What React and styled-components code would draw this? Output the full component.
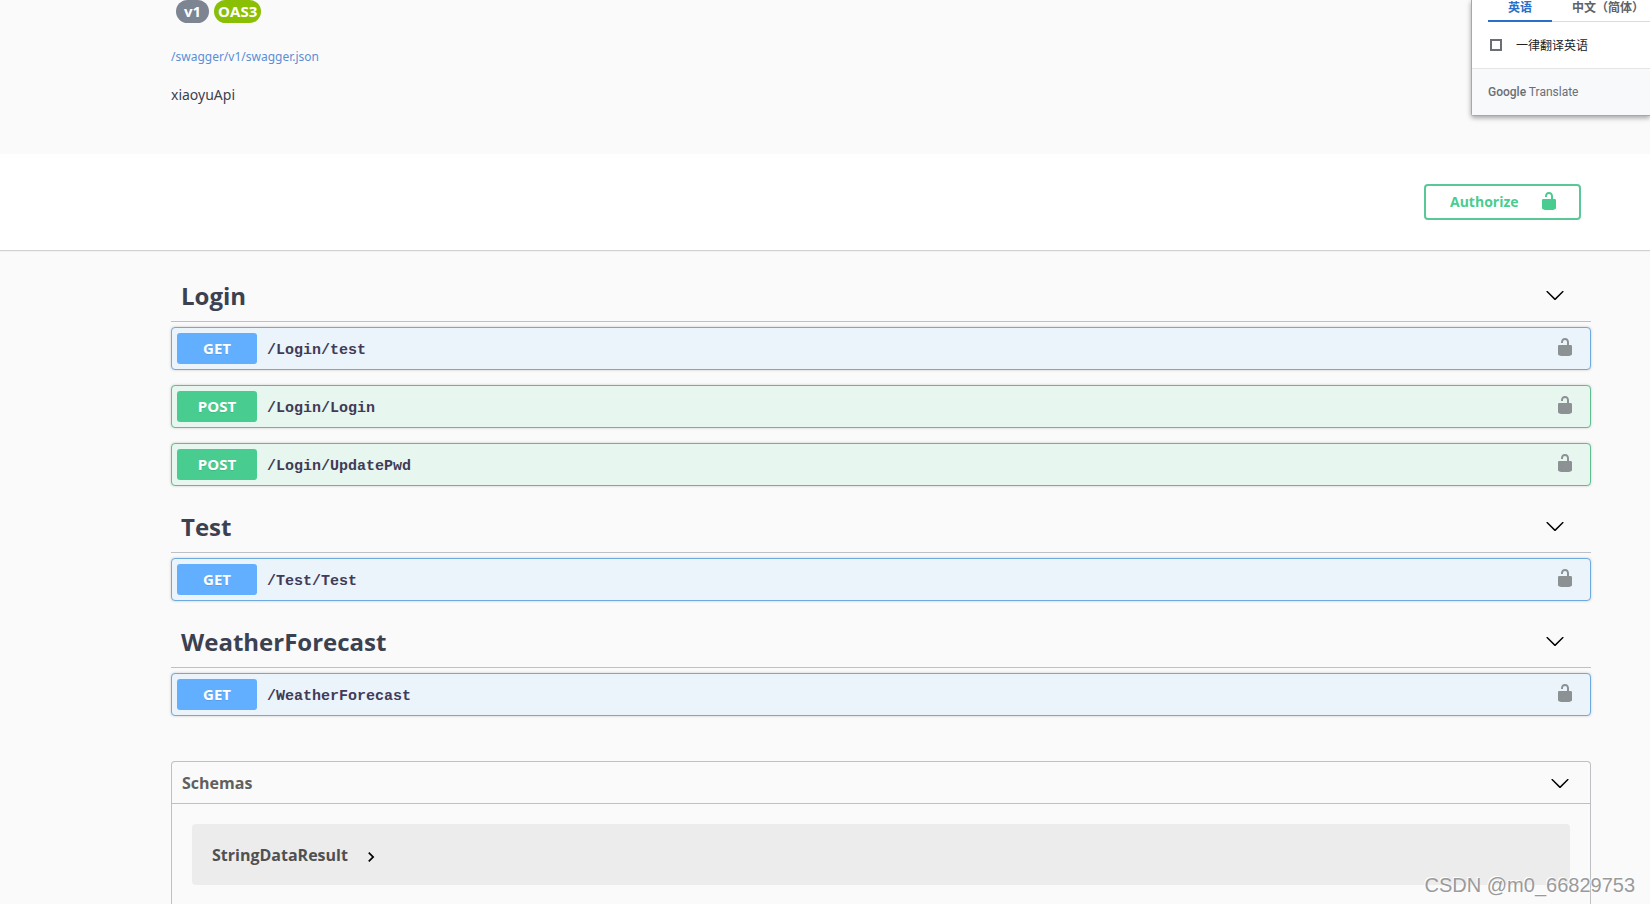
import React from 'react';
import styled, { createGlobalStyle } from 'styled-components';

const sections = [
    {
        name: 'Login',
        operations: [
            { method: 'get', path: '/Login/test' },
            { method: 'post', path: '/Login/Login' },
            { method: 'post', path: '/Login/UpdatePwd' },
        ],
    },
    { name: 'Test', operations: [{ method: 'get', path: '/Test/Test' }] },
    { name: 'WeatherForecast', operations: [{ method: 'get', path: '/WeatherForecast' }] },
];

const colors = {
    get: { main: '#61affe', border: '#6ea9e0', back: '#ebf3fb' },
    post: { main: '#49cc90', border: '#5fbd90', back: '#e7f6ee' },
};

const Unlocked = () => (
    <svg width="20" height="20" viewBox="0 0 20 20" fill="currentColor" aria-hidden="true">
        <path d="M15.8 8H14V5.6C14 2.703 12.665 1 10 1 7.334 1 6 2.703 6 5.6V6h2v-.801C8 3.754 8.797 3 10 3c1.203 0 2 .754 2 2.199V8H4c-.553 0-1 .646-1 1.199V17c0 .549.428 1.139.951 1.307l1.197.387C5.672 18.861 6.55 19 7.1 19h5.8c.549 0 1.428-.139 1.951-.307l1.196-.387c.524-.167.953-.757.953-1.306V9.199C17 8.646 16.352 8 15.8 8z" />
    </svg>
);

const ArrowDown = () => (
    <svg width="20" height="20" viewBox="0 0 20 20" aria-hidden="true">
        <path d="M17.418 6.109c.272-.268.709-.268.979 0s.271.701 0 .969l-7.908 7.83c-.27.268-.707.268-.979 0l-7.908-7.83c-.27-.268-.27-.701 0-.969.271-.268.709-.268.979 0L10 13.25l7.418-7.141z" />
    </svg>
);

const Chevron = () => (
    <svg width="20" height="20" viewBox="0 0 24 24" aria-hidden="true">
        <path d="M10 6L8.59 7.41 13.17 12l-4.58 4.59L10 18l6-6z" />
    </svg>
);

const Operation = ({ method, path }) => (
    <OpBlock $method={method}>
        <OpSummary>
            <Method $method={method}>{method.toUpperCase()}</Method>
            <Path>{path}</Path>
        </OpSummary>
        <LockButton aria-label={`Authorize ${path}`}>
            <Unlocked />
        </LockButton>
    </OpBlock>
);

const TranslatePopup = () => (
    <Popup>
        <Tabs>
            <Tab $active>英语</Tab>
            <Tab>中文（简体）</Tab>
        </Tabs>
        <Always>
            <input type="checkbox" />
            一律翻译英语
        </Always>
        <PopupFooter>
            <b>Google</b> Translate
        </PopupFooter>
    </Popup>
);

const App = () => {
    return (
        <Page>
            <GlobalStyle />
            <Info>
                <Badges>
                    <Badge>v1</Badge>
                    <Badge $oas>OAS3</Badge>
                </Badges>
                <SpecLink href="/swagger/v1/swagger.json">/swagger/v1/swagger.json</SpecLink>
                <Description>xiaoyuApi</Description>
            </Info>

            <SchemeContainer>
                <AuthorizeButton>
                    <span>Authorize</span>
                    <Unlocked />
                </AuthorizeButton>
            </SchemeContainer>

            <Main>
                {sections.map((section) => (
                    <section key={section.name}>
                        <SectionHeader>
                            <h3>{section.name}</h3>
                            <IconButton aria-label={`Collapse ${section.name}`}>
                                <ArrowDown />
                            </IconButton>
                        </SectionHeader>
                        {section.operations.map((op) => (
                            <Operation key={op.path} {...op} />
                        ))}
                    </section>
                ))}

                <Schemas>
                    <SchemasHeader>
                        <h4>Schemas</h4>
                        <IconButton aria-label="Collapse schemas">
                            <ArrowDown />
                        </IconButton>
                    </SchemasHeader>
                    <Model>
                        StringDataResult
                        <Chevron />
                    </Model>
                </Schemas>
            </Main>

            <TranslatePopup />
            <Watermark>CSDN @m0_66829753</Watermark>
        </Page>
    );
};

const GlobalStyle = createGlobalStyle`
    * {
        box-sizing: border-box;
    }

    body {
        margin: 0;
        background: #fafafa;
        color: #3b4151;
        font-family: "Open Sans", "Noto Sans", "Noto Sans CJK SC", sans-serif;
    }

    button {
        font-family: inherit;
        cursor: pointer;
    }

    h3, h4, p {
        margin: 0;
    }

    svg {
        display: block;
        flex-shrink: 0;
    }
`;

const Page = styled.div`
    position: relative;
    display: flex;
    flex-direction: column;
    min-height: 100vh;
    overflow: hidden;
`;

const Info = styled.header`
    display: flex;
    flex-direction: column;
    align-items: flex-start;
    height: 154px;
    padding: 0 59px 0 171px;
    font-family: "Noto Sans", sans-serif;
`;

const Badges = styled.div`
    display: flex;
    gap: 5px;
    padding-left: 5px;
    margin-bottom: 24px;
    font-family: "Open Sans", sans-serif;
`;

const Badge = styled.span`
    height: 23px;
    padding: 0 ${(props) => (props.$oas ? 4 : 8)}px;
    border-radius: 12px;
    background: ${(props) => (props.$oas ? '#89bf04' : '#7d8492')};
    color: #fff;
    font-size: 15px;
    font-weight: 700;
    line-height: 23px;
`;

const SpecLink = styled.a`
    color: #5a8fd6;
    font-size: 12px;
    line-height: 20px;
    text-decoration: none;
`;

const Description = styled.p`
    margin-top: 18px;
    font-size: 14px;
    line-height: 20px;
`;

const SchemeContainer = styled.div`
    display: flex;
    justify-content: flex-end;
    padding: 30px 69px 30px 171px;
    background: #fff;
    box-shadow: 0 1px 1px rgba(0, 0, 0, 0.16);
`;

const AuthorizeButton = styled.button`
    display: flex;
    align-items: center;
    justify-content: space-between;
    width: 157px;
    height: 36px;
    padding: 0 20px 2px 24px;
    border: 2px solid #5ac796;
    border-radius: 4px;
    background: transparent;
    color: #49cc90;
    font-size: 14px;
    font-weight: 700;
`;

const Main = styled.main`
    display: flex;
    flex: 1;
    flex-direction: column;
    padding: 20px 59px 0 171px;
`;

const SectionHeader = styled.div`
    display: flex;
    align-items: center;
    justify-content: space-between;
    height: 52px;
    margin-bottom: 5px;
    padding: 0 26px 0 10px;
    border-bottom: 1px solid #bfc0c3;

    h3 {
        font-size: 24px;
        line-height: 32px;
    }
`;

const IconButton = styled.button`
    padding: 0 0 2px;
    border: none;
    background: none;
`;

const OpBlock = styled.div`
    display: flex;
    align-items: center;
    height: 43px;
    margin-bottom: 15px;
    border: 1px solid ${(props) => colors[props.$method].border};
    border-radius: 4px;
    background: ${(props) => colors[props.$method].back};
    box-shadow: 0 0 3px rgba(0, 0, 0, 0.19);
`;

const OpSummary = styled.button`
    display: flex;
    flex: 1;
    align-items: center;
    gap: 10px;
    padding: 5px;
    border: none;
    background: none;
    color: inherit;
`;

const Method = styled.span`
    width: 80px;
    border-radius: 3px;
    background: ${(props) => colors[props.$method].main};
    color: #fff;
    font-size: 15px;
    font-weight: 700;
    line-height: 31px;
    text-align: center;
    text-shadow: 0 1px 0 rgba(0, 0, 0, 0.1);
`;

const Path = styled.span`
    padding-top: 4px;
    color: #403b58;
    font-family: "Liberation Mono", monospace;
    font-size: 15px;
    font-weight: 600;
`;

const LockButton = styled(IconButton)`
    padding-bottom: 3px;
    margin-right: 15px;
    color: #8c9194;
`;

const Schemas = styled.section`
    flex: 1;
    margin-top: 30px;
    border: 1px solid #bfc0c3;
    border-bottom: none;
    border-radius: 4px 4px 0 0;
`;

const SchemasHeader = styled.div`
    display: flex;
    align-items: center;
    justify-content: space-between;
    height: 42px;
    padding: 0 20px 0 10px;
    border-bottom: 1px solid #bfc0c3;

    h4 {
        color: #606060;
        font-size: 16px;
    }

    button {
        padding: 0;
    }
`;

const Model = styled.button`
    display: flex;
    align-items: center;
    gap: 13px;
    width: calc(100% - 40px);
    height: 61px;
    margin: 20px 20px 15px;
    padding: 0 20px;
    border: none;
    border-radius: 4px;
    background: #ececec;
    color: #505050;
    font-size: 16px;
    font-weight: 700;

    svg {
        margin-top: 4px;
        fill: #000;
    }
`;

const Popup = styled.aside`
    position: absolute;
    top: 0;
    right: 0;
    width: 179px;
    height: 116px;
    border: 1px solid #a8a8a8;
    border-width: 0 0 1px 1px;
    border-radius: 0 0 0 3px;
    background: #fff;
    box-shadow: 0 2px 5px rgba(0, 0, 0, 0.35);
    color: #202124;
    font-size: 12px;
`;

const Tabs = styled.div`
    display: flex;
    height: 22px;
    margin-left: 16px;
    border-bottom: 1px solid #dadce0;
`;

const Tab = styled.button`
    flex-shrink: 0;
    width: ${(props) => (props.$active ? '64px' : 'auto')};
    height: 22px;
    padding: 0 ${(props) => (props.$active ? 0 : 20)}px 6px;
    border: none;
    border-bottom: 2px solid ${(props) => (props.$active ? '#2a6fc9' : 'transparent')};
    background: none;
    color: ${(props) => (props.$active ? '#2a6fc9' : '#5f6368')};
    font-family: "Noto Sans CJK SC", sans-serif;
    font-size: 12px;
    font-weight: 700;
    line-height: 14px;
    white-space: nowrap;
`;

const Always = styled.label`
    display: flex;
    align-items: center;
    gap: 14px;
    height: 46px;
    padding-left: 18px;

    input {
        appearance: none;
        width: 12px;
        height: 12px;
        margin: 0;
        border: 2px solid #6b6e72;
    }
`;

const PopupFooter = styled.div`
    height: 47px;
    padding-left: 16px;
    border-top: 1px solid #e4e5e7;
    background: #f8f9fb;
    color: #6b6e72;
    font-family: Roboto, sans-serif;
    font-size: 12px;
    line-height: 46px;

    b {
        font-weight: 500;
    }
`;

const Watermark = styled.div`
    position: absolute;
    right: 15px;
    bottom: 7px;
    color: #9a9a9a;
    font-family: "Liberation Sans", sans-serif;
    font-size: 20px;
    line-height: 24px;
    text-shadow: -1px -1px 0 #fff;
`;

export default App;
